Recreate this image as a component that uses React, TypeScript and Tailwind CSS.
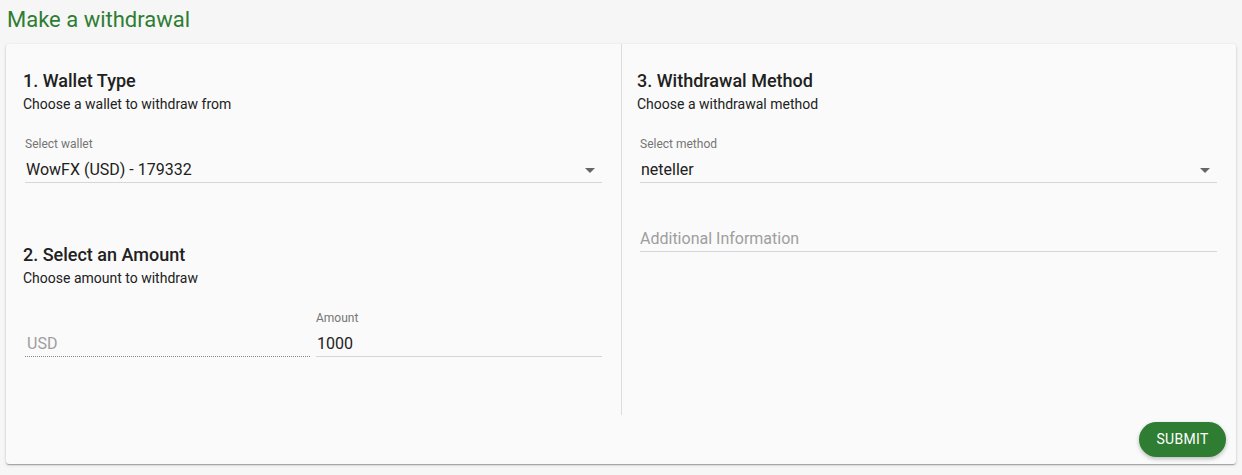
import React from "react";

const font = { fontFamily: "Roboto, 'Liberation Sans', sans-serif" };

function Caret() {
  return (
    <svg width="10" height="5" viewBox="0 0 10 5" className="shrink-0">
      <path d="M0 0h10L5 5z" fill="#666" />
    </svg>
  );
}

function SelectField({ label, value }: { label: string; value: string }) {
  return (
    <div>
      <div className="text-[12px] leading-4 text-[#757575]">{label}</div>
      <div className="mt-[6px] flex items-center justify-between border-b border-[#d6d6d6] pr-[7px]">
        <span className="text-[16px] leading-6 text-[#212121] pl-[1px]">{value}</span>
        <Caret />
      </div>
    </div>
  );
}

function SectionHead({ title, sub }: { title: string; sub: string }) {
  return (
    <div>
      <h2 className="text-[18px] leading-6 font-medium text-[#212121]">{title}</h2>
      <p className="mt-[1px] text-[14px] leading-5 text-[#212121]">{sub}</p>
    </div>
  );
}

export default function App() {
  return (
    <div className="h-[475px] bg-[#f6f6f6] px-[6px]" style={font}>
      <h1 className="h-[44px] pt-[6px] pl-[1px] text-[22px] leading-7 text-[#2e7d32]">
        Make a withdrawal
      </h1>
      <div className="w-[1230px] h-[420px] bg-[#fafafa] rounded-[3px] shadow-[0_1px_3px_rgba(0,0,0,0.2),0_1px_1px_rgba(0,0,0,0.14),0_2px_1px_-1px_rgba(0,0,0,0.12)] flex flex-col">
        <div className="flex h-[371px]">
          {/* left: wallet + amount */}
          <div className="w-[616px] pl-[17px] pr-[19px] pt-[25px] border-r border-[#dcdcdc]">
            <SectionHead title="1. Wallet Type" sub="Choose a wallet to withdraw from" />
            <div className="mt-[22px] ml-[2px]">
              <SelectField label="Select wallet" value="WowFX (USD) - 179332" />
            </div>

            <div className="mt-[60px]">
              <SectionHead title="2. Select an Amount" sub="Choose amount to withdraw" />
            </div>
            <div className="mt-[22px] ml-[2px] flex gap-[6px]">
              <div className="w-[285px] flex flex-col justify-end">
                <div className="text-[16px] leading-6 text-[#9e9e9e] pl-[2px] border-b border-dotted border-[#888]">
                  USD
                </div>
              </div>
              <div className="flex-1">
                <div className="text-[12px] leading-4 text-[#757575]">Amount</div>
                <div className="mt-[6px] text-[16px] leading-6 text-[#212121] pl-[1px] border-b border-[#d6d6d6]">
                  1000
                </div>
              </div>
            </div>
          </div>

          {/* right: method */}
          <div className="flex-1 pl-[15px] pr-[19px] pt-[25px]">
            <SectionHead title="3. Withdrawal Method" sub="Choose a withdrawal method" />
            <div className="mt-[22px] ml-[3px]">
              <SelectField label="Select method" value="neteller" />
              <div className="mt-[44px] text-[16px] leading-6 text-[#9e9e9e] border-b border-[#d6d6d6]">
                Additional Information
              </div>
            </div>
          </div>
        </div>

        <div className="flex justify-end pr-[10px] pt-[7px]">
          <button className="h-[35px] w-[87px] rounded-full bg-[#2e7d32] text-white text-[14px] font-normal tracking-[0.3px] shadow-[0_2px_4px_rgba(0,0,0,0.25)]">
            SUBMIT
          </button>
        </div>
      </div>
    </div>
  );
}
